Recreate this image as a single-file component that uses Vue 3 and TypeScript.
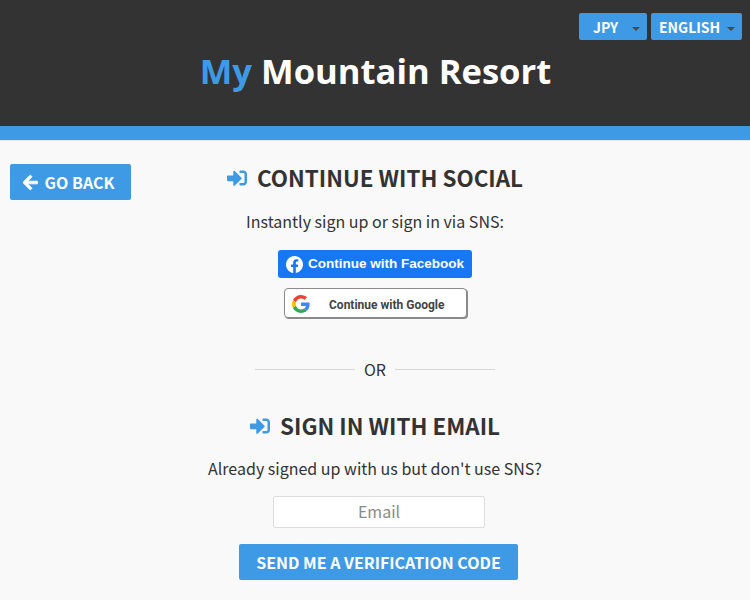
<template>
  <div class="page">
    <header class="top">
      <div class="selectors">
        <button v-for="sel in selectors" :key="sel.label" class="select" :style="{ width: sel.width + 'px' }">
          <span>{{ sel.label }}</span>
          <i class="caret"></i>
        </button>
      </div>
      <h1 class="brand"><span class="brand-my">My</span> Mountain Resort</h1>
    </header>
    <div class="band"></div>

    <main class="body">
      <div class="side">
        <button class="btn back">
          <svg class="back-icon" viewBox="0 0 448 512" width="15" height="17">
            <path fill="#fff" stroke="#fff" stroke-width="24" d="M257.500 445.100l-22.200 22.200c-9.400 9.400-24.600 9.400-33.900 0L7 273c-9.400-9.400-9.400-24.600 0-33.900L201.400 44.700c9.400-9.400 24.600-9.400 33.900 0l22.200 22.200c9.500 9.500 9.300 25-.4 34.300L136.600 216H424c13.300 0 24 10.700 24 24v32c0 13.300-10.700 24-24 24H136.600l120.500 114.800c9.800 9.300 10 24.800.4 34.300z" />
          </svg>
          GO BACK
        </button>
      </div>

      <section class="center">
        <h2 class="heading">
          <svg class="signin-icon" viewBox="0 0 512 512" width="20" height="20">
            <path fill="#3f9ae5" d="M416 448h-84c-6.600 0-12-5.400-12-12v-40c0-6.600 5.400-12 12-12h84c17.700 0 32-14.300 32-32V160c0-17.700-14.300-32-32-32h-84c-6.600 0-12-5.400-12-12V76c0-6.600 5.400-12 12-12h84c53 0 96 43 96 96v192c0 53-43 96-96 96zm-47-201L201 79c-15-15-41-4.500-41 17v96H24c-13.300 0-24 10.700-24 24v96c0 13.300 10.700 24 24 24h136v96c0 21.500 26 32 41 17l168-168c9.300-9.400 9.300-24.600 0-34z" />
          </svg>
          CONTINUE WITH SOCIAL
        </h2>
        <p class="lead">Instantly sign up or sign in via SNS:</p>

        <button class="fb">
          <svg viewBox="0 0 16 16" width="17" height="17">
            <path fill="#fff" d="M16 8.049c0-4.446-3.582-8.050-8-8.050C3.580 0-.002 3.603-.002 8.050c0 4.017 2.926 7.347 6.750 7.951v-5.625h-2.030V8.050H6.750V6.275c0-2.017 1.195-3.131 3.022-3.131.876 0 1.791.157 1.791.157v1.980h-1.009c-.993 0-1.303.621-1.303 1.258v1.510h2.218l-.354 2.326H9.250V16c3.824-.604 6.750-3.934 6.750-7.951z" />
          </svg>
          <span class="fb-label">Continue with Facebook</span>
        </button>

        <button class="google">
          <svg viewBox="0 0 48 48" width="18" height="18">
            <path fill="#EA4335" d="M24 9.500c3.540 0 6.710 1.220 9.210 3.600l6.850-6.850C35.900 2.380 30.470 0 24 0 14.620 0 6.510 5.380 2.560 13.220l7.980 6.190C12.430 13.720 17.740 9.500 24 9.500z" />
            <path fill="#4285F4" d="M46.980 24.550c0-1.570-.15-3.090-.38-4.550H24v9.020h12.940c-.58 2.960-2.260 5.480-4.780 7.180l7.730 6c4.510-4.180 7.090-10.360 7.090-17.650z" />
            <path fill="#FBBC05" d="M10.530 28.590c-.48-1.450-.76-2.990-.76-4.590s.27-3.140.76-4.590l-7.980-6.190C.92 16.460 0 20.120 0 24c0 3.880.92 7.540 2.560 10.780l7.970-6.190z" />
            <path fill="#34A853" d="M24 48c6.480 0 11.930-2.130 15.890-5.810l-7.730-6c-2.150 1.450-4.920 2.300-8.160 2.300-6.260 0-11.570-4.220-13.470-9.910l-7.980 6.190C6.510 42.620 14.620 48 24 48z" />
          </svg>
          <span class="google-label">Continue with Google</span>
        </button>

        <div class="divider"><span>OR</span></div>

        <h2 class="heading">
          <svg class="signin-icon" viewBox="0 0 512 512" width="20" height="20">
            <path fill="#3f9ae5" d="M416 448h-84c-6.600 0-12-5.400-12-12v-40c0-6.600 5.400-12 12-12h84c17.700 0 32-14.300 32-32V160c0-17.700-14.300-32-32-32h-84c-6.600 0-12-5.400-12-12V76c0-6.600 5.400-12 12-12h84c53 0 96 43 96 96v192c0 53-43 96-96 96zm-47-201L201 79c-15-15-41-4.500-41 17v96H24c-13.300 0-24 10.700-24 24v96c0 13.300 10.700 24 24 24h136v96c0 21.500 26 32 41 17l168-168c9.300-9.400 9.300-24.600 0-34z" />
          </svg>
          SIGN IN WITH EMAIL
        </h2>
        <p class="lead lead-email">Already signed up with us but don't use SNS?</p>

        <input class="email" type="text" placeholder="Email" />
        <button class="btn send">SEND ME A VERIFICATION CODE</button>
      </section>
    </main>
  </div>
</template>

<script setup lang="ts">
const selectors = [
  { label: 'JPY', width: 68 },
  { label: 'ENGLISH', width: 91 },
];
</script>

<style>
html,
body {
  margin: 0;
  background: #f9f9f9;
}
</style>

<style scoped>
.page {
  font-family: "Noto Sans CJK JP", "Noto Sans", sans-serif;
  color: #333;
  height: 600px;
  overflow: hidden;
  background: #f9f9f9;
}

.top {
  height: 126px;
  background: #333;
  box-sizing: border-box;
  padding: 13px 8px 0 0;
}

.selectors {
  display: flex;
  justify-content: flex-end;
  gap: 4px;
}

.select {
  height: 27px;
  padding: 0 0 0 8px;
  border: 0;
  border-radius: 2px;
  background: #3f9ae5;
  color: #fff;
  font: 700 14px "Noto Sans CJK JP", sans-serif;
  display: flex;
  align-items: center;
  position: relative;
  box-sizing: border-box;
}

.select:first-child span {
  margin-left: 6px;
}

.caret {
  position: absolute;
  right: 7px;
  top: 14px;
  border: 4px solid transparent;
  border-top: 4px solid #4a4a4a;
  border-bottom: 0;
}

.brand {
  margin: 7px 0 0;
  padding-left: 9px;
  text-align: center;
  color: #fff;
  font: 700 34.600px/48px "Open Sans", sans-serif;
}

.brand-my {
  color: #3f9ae5;
}

.band {
  height: 14px;
  background: #3f9ae5;
  border-bottom: 1px solid #e6e6e6;
}

.body {
  display: grid;
  grid-template-columns: minmax(0, 1fr) 500px minmax(0, 1fr);
  padding-top: 21px;
}

.side {
  padding-left: 10px;
  padding-top: 2px;
  white-space: nowrap;
}

.btn {
  border: 0;
  border-radius: 2px;
  background: #3f9ae5;
  color: #fff;
  font: 700 16px "Noto Sans CJK JP", sans-serif;
  display: flex;
  align-items: center;
  justify-content: center;
  box-sizing: border-box;
}

.back {
  width: 121px;
  height: 36px;
  gap: 7px;
  padding: 0 4px 0 0;
}

.center {
  display: flex;
  flex-direction: column;
  align-items: center;
}

.heading {
  margin: 0;
  height: 30px;
  display: flex;
  align-items: center;
  gap: 10px;
  font: 700 22.400px/30px "Noto Sans CJK JP", sans-serif;
  color: #333;
}

.signin-icon {
  margin-top: 1px;
}

.lead {
  margin: 16px 0 0;
  font-size: 16px;
  line-height: 26px;
  color: #333;
}

.lead-email {
  margin-top: 15px;
}

.fb {
  margin-top: 16px;
  width: 194px;
  height: 28px;
  border: 0;
  border-radius: 3px;
  background: #1877f2;
  color: #fff;
  font: 700 13.500px "Liberation Sans", sans-serif;
  display: flex;
  align-items: center;
  gap: 5px;
  padding: 0 0 0 8px;
  box-sizing: border-box;
}

.fb-label {
  margin-bottom: 2px;
}

.google {
  margin-top: 10px;
  margin-left: 1px;
  width: 183px;
  height: 30px;
  border: 1px solid #8a8a8a;
  border-radius: 4px;
  box-shadow: 1px 1px 0 #8a8a8a;
  background: #fff;
  color: #444;
  font: 700 12px Roboto, sans-serif;
  display: flex;
  align-items: center;
  padding: 2px 0 0 7px;
  box-sizing: border-box;
}

.google-label {
  margin-left: 19px;
  margin-top: 1px;
}

.divider {
  margin-top: 39px;
  width: 240px;
  display: flex;
  align-items: center;
  gap: 9px;
  font-size: 16px;
  line-height: 24px;
  color: #333;
}

.divider::before,
.divider::after {
  content: "";
  flex: 1;
  border-top: 1px solid #d8d8d8;
}

.divider + .heading {
  margin-top: 29px;
}

.email {
  margin-top: 15px;
  width: 212px;
  height: 32px;
  border: 1px solid #ddd;
  border-radius: 2px;
  background: #fff;
  text-align: center;
  font: 400 16px "Noto Sans CJK JP", sans-serif;
  box-sizing: border-box;
  padding: 0 0 2px;
  margin-left: 8px;
}

.email::placeholder {
  color: #8a8a8a;
  opacity: 1;
}

.send {
  margin-top: 16px;
  width: 279px;
  height: 36px;
  margin-left: 7px;
}
</style>
